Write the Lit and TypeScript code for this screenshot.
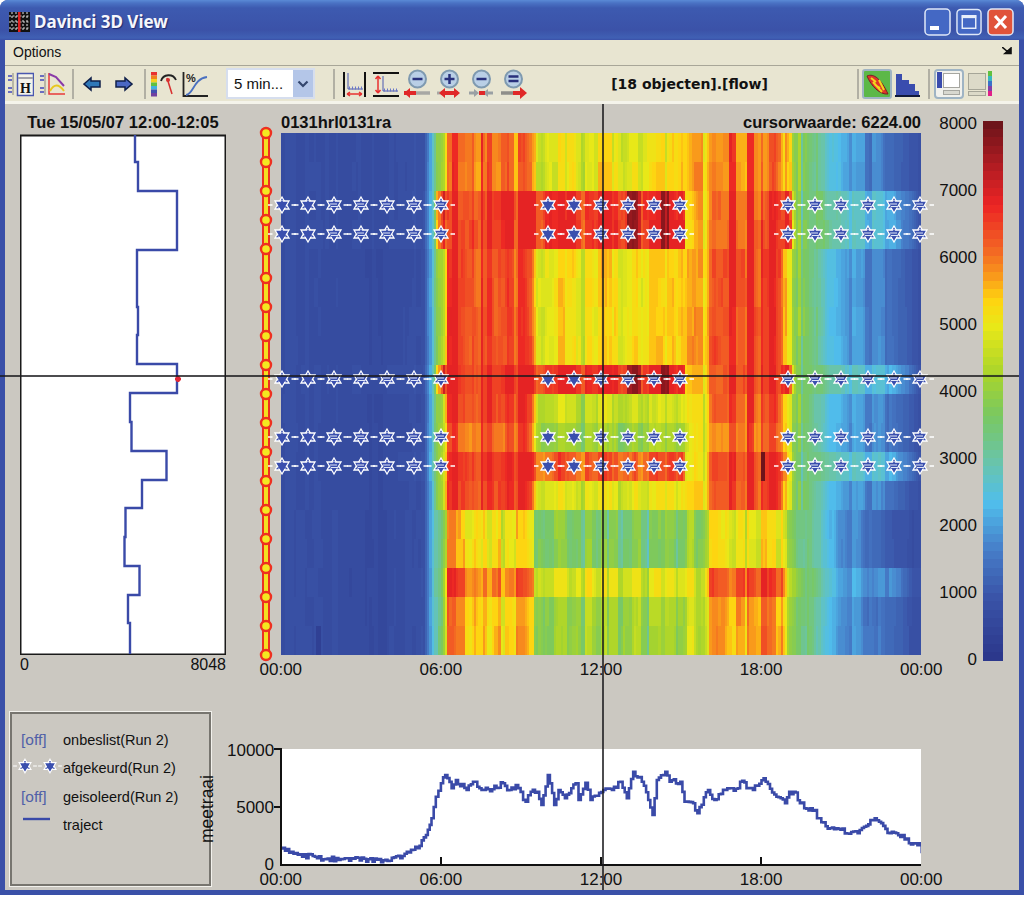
import { LitElement, css, html, svg } from "lit";
import { customElement } from "lit/decorators.js";

// colour ramp of the legend, value -> rgb
const RAMP: [number, number[]][] = [
  [0, [42, 52, 136]],
  [1000, [58, 84, 168]],
  [1700, [70, 125, 200]],
  [2400, [80, 190, 236]],
  [3000, [105, 196, 170]],
  [3700, [122, 200, 96]],
  [4300, [168, 212, 44]],
  [5000, [232, 232, 24]],
  [5400, [254, 212, 16]],
  [5800, [248, 146, 28]],
  [6200, [242, 96, 36]],
  [6800, [236, 36, 36]],
  [7400, [176, 28, 34]],
  [8000, [110, 20, 26]],
];

function rampColor(v: number) {
  const q = Math.max(0, Math.min(8000, Math.round(v / 125) * 125));
  for (let i = 1; i < RAMP.length; i++) {
    if (q <= RAMP[i][0]) {
      const [a, ca] = RAMP[i - 1];
      const [b, cb] = RAMP[i];
      const t = (q - a) / (b - a);
      const c = ca.map((x, k) => Math.round(x + (cb[k] - x) * t));
      return `rgb(${c[0]},${c[1]},${c[2]})`;
    }
  }
  return "rgb(110,20,26)";
}

function rng(seed: number) {
  let s = seed;
  return () => {
    s = (s * 1664525 + 1013904223) % 4294967296;
    return s / 4294967296;
  };
}

function stripes(seed: number, n: number) {
  const r = rng(seed);
  const out: number[] = [];
  while (out.length < n) {
    const v = r() * 2 - 1;
    const len = 1 + Math.floor(r() * 4);
    for (let i = 0; i < len; i++) out.push(v);
  }
  return out;
}

const KEYS = [281, 385, 425, 432, 438, 445, 448, 525, 545, 612, 684, 686, 705, 712, 780, 788, 800, 830, 895, 921];
const A = [850, 750, 950, 2500, 4300, 5200, 6500, 5900, 4800, 4900, 5100, 5200, 5400, 6200, 6200, 5000, 3900, 2500, 1300, 900];
const B = [850, 750, 1000, 2600, 5000, 6900, 6800, 6700, 6700, 6700, 6700, 5000, 5300, 6500, 6700, 6500, 3700, 3000, 2200, 1000];
const C = [850, 700, 900, 2400, 4400, 5200, 6800, 6200, 5000, 5100, 5200, 5300, 5500, 6500, 6700, 4800, 3900, 2400, 1400, 900];
const E = [850, 700, 900, 2400, 4400, 5200, 6800, 6400, 4500, 4500, 4600, 4800, 5000, 6300, 6500, 4700, 3800, 2400, 1500, 900];
const F = [850, 700, 900, 2400, 4400, 5200, 6400, 6100, 4000, 4000, 4100, 4500, 4900, 6100, 6200, 4700, 3700, 2400, 1500, 900];
const G = [850, 700, 1000, 2500, 4400, 5500, 6800, 6700, 6100, 6100, 6200, 4700, 5000, 6500, 6700, 5000, 3500, 3000, 2200, 1000];
const H = [850, 700, 900, 2400, 4400, 5200, 6800, 6500, 4800, 4800, 4900, 5000, 5200, 6400, 6700, 4600, 3700, 2400, 1400, 850];
const I = [850, 700, 900, 2300, 3600, 4400, 5400, 5000, 3800, 3500, 3500, 3700, 4300, 4800, 5000, 4300, 3500, 2300, 1000, 800];
const J = [850, 700, 900, 2300, 3800, 4800, 6200, 5900, 4700, 4800, 4700, 4800, 5000, 6000, 6400, 5000, 3800, 2500, 1700, 900];
const K = [850, 700, 900, 2300, 3700, 4600, 5700, 5300, 4000, 4100, 4000, 4300, 4800, 5400, 5700, 4600, 3600, 2300, 1300, 800];
const ROWS = [A, A, B, B, C, C, C, C, B, E, F, G, H, I, I, J, K, K];

const COLS = 288;
const CW = 640 / COLS;
const RH = 29;

function drawHeat(canvas: HTMLCanvasElement) {
  const ctx = canvas.getContext("2d")!;
  const s1 = stripes(11, COLS + 8);
  const s2 = stripes(57, COLS + 8);
  ROWS.forEach((tbl, r) => {
    const fine = stripes(200 + r, COLS + 8);
    for (let c = 0; c < COLS; c++) {
      const x = 281 + (c + 0.5) * CW;
      let k = 0;
      while (k < KEYS.length - 2 && x > KEYS[k + 1]) k++;
      const t = Math.min(1, (x - KEYS[k]) / (KEYS[k + 1] - KEYS[k]));
      let v = tbl[k] + (tbl[k + 1] - tbl[k]) * t;
      const amp = v < 1500 ? 90 : v < 3000 ? 380 : 800;
      const share = (r < 4 ? s1[c] : r < 13 ? s1[c] * 0.7 + s2[c] * 0.3 : s2[c]) * 0.8 + fine[c] * 0.2;
      v = Math.min(6850, v + share * amp);
      if (tbl === B && ((x > 437 && x < 446) || (x > 628 && x < 640) || (x > 660 && x < 670))) v += 900;
      if (tbl === G && x > 761 && x < 765) v += 1500;
      if (r === 17 && x > 316 && x < 322) v = 350;
      ctx.fillStyle = rampColor(v);
      ctx.fillRect(Math.floor((c * 640) / COLS), r * RH, Math.ceil(CW) + 1, RH);
    }
  });
}

function drawRamp(canvas: HTMLCanvasElement) {
  const ctx = canvas.getContext("2d")!;
  for (let i = 0; i < 64; i++) {
    ctx.fillStyle = rampColor(8000 - (i + 0.5) * 125);
    ctx.fillRect(0, Math.floor(i * 8.4375), 20, 9);
  }
}

const STAR_X = [282, 308, 334, 361, 387, 414, 441, 548, 574, 601, 628, 654, 680, 788, 815, 841, 868, 894, 920];
const STAR_Y = [205, 234, 379, 437, 466];
const TRI_A = "0,-8 7,4 -7,4";
const TRI_B = "0,8 7,-4 -7,-4";

const star = (x: number, y: number, k = 1, lined = false) => svg`
  <g transform="translate(${x} ${y}) scale(${k})">
    <path d="M-14 0H-9.500M9.500 0H14" stroke="#fff" stroke-width="1.300" />
    <polygon points=${TRI_A} fill="#3a4fae" stroke="#fff" stroke-width="1.300" />
    <polygon points=${TRI_B} fill="#3a4fae" stroke="#fff" stroke-width="1.300" />
    <polygon points="0,-5 4.400,2.500 -4.400,2.500" fill="#3a4fae" />
    <polygon points="0,5 4.400,-2.500 -4.400,-2.500" fill="#3a4fae" />
    ${lined ? svg`<path d="M-4 -1H3M-3 1.500H4" stroke="#dfe6f6" stroke-width="1" />` : ""}
  </g>`;

const PROFILE: [number, number][] = [
  [25, 325], [50, 335], [75, 350], [100, 348], [125, 358], [180, 355], [230, 358], [280, 362], [310, 348], [345, 325],
  [365, 285], [378, 235], [388, 170], [400, 130], [410, 105], [425, 145], [435, 120], [460, 150], [475, 125], [490, 145],
  [520, 148], [545, 130], [560, 150], [575, 135], [598, 185], [610, 155], [625, 155], [635, 195], [650, 105], [665, 195],
  [675, 150], [690, 175], [715, 130], [722, 180], [738, 128], [750, 180], [780, 150], [800, 150], [820, 125], [835, 175],
  [850, 95], [870, 125], [885, 180], [895, 225], [905, 120], [925, 95], [935, 125], [960, 125], [970, 185], [990, 190],
  [1000, 220], [1025, 150], [1040, 180], [1065, 150], [1095, 145], [1100, 125], [1130, 150], [1155, 115], [1185, 170], [1205, 190],
  [1215, 155], [1225, 155], [1250, 205], [1275, 210], [1280, 235], [1310, 265], [1375, 280], [1390, 260], [1415, 235], [1450, 280],
  [1480, 285], [1495, 310], [1520, 310], [1525, 340],
];

// stepped trace of the lower chart, in the svg's own coordinates (plot starts at 7,4)
function profilePath() {
  const pts = PROFILE.map(([x, y]) => [270 + x / 2.34 - 274, 740 + y / 3 - 745]);
  const r = rng(5);
  let d = `M${pts[0][0]} ${pts[0][1]}`;
  for (let i = 1; i < pts.length; i++) {
    const [x0, y0] = pts[i - 1];
    const [x1, y1] = pts[i];
    const n = Math.max(1, Math.round((x1 - x0) / 2.2));
    for (let k = 1; k <= n; k++) {
      const x = x0 + ((x1 - x0) * k) / n;
      const y = y0 + ((y1 - y0) * k) / n + (k < n ? (r() - 0.5) * 5 : 0);
      d += `H${x.toFixed(1)}V${y.toFixed(1)}`;
    }
  }
  return d;
}

const TRAJECT =
  "M115 0V27H118V56H157V115H117V172H118V200H117V229H157V258H110V287H111.500V316H146.500V345H122V373H105.500V402H104.500V431H119.500V460H108V488H110V519";

@customElement("app-root")
export class AppRoot extends LitElement {
  static styles = css`
    :host {
      display: block;
      width: 1024px;
      height: 897px;
      background: #fff;
      font-family: "Liberation Sans", Arial, sans-serif;
      color: #111;
      overflow: hidden;
    }
    .win {
      height: 895px;
      display: flex;
      flex-direction: column;
      background: #3a50a8;
      border-radius: 8px 8px 0 0;
    }
    .title {
      height: 40px;
      flex: none;
      box-sizing: border-box;
      display: flex;
      align-items: center;
      padding: 3px 10px 0 9px;
      border-radius: 8px 8px 0 0;
      background: linear-gradient(180deg, #5a8ad6 0, #4a72c4 3px, #3d5ab0 8px, #3b52a8 30px, #4060b4 38px, #3a50a8 40px);
    }
    .title .name {
      margin-left: 4px;
      font-family: "Noto Sans", sans-serif;
      font-weight: 700;
      font-size: 17px;
      color: #f4f6fc;
      text-shadow: 1px 1px 1px #1c2a70;
      flex: 1;
    }
    .ctl {
      display: flex;
      gap: 5px;
    }
    .ctl svg { display: block; }
    .inner {
      flex: 1;
      margin: 0 5px 5px;
      display: flex;
      flex-direction: column;
      position: relative;
      background: #cbc8c1;
    }
    .menu {
      height: 25px;
      flex: none;
      box-sizing: border-box;
      background: #e8e5d1;
      display: flex;
      align-items: center;
      justify-content: space-between;
      padding: 0 7px 2px 8px;
      font-size: 14px;
    }
    .tools {
      height: 39px;
      flex: none;
      box-sizing: border-box;
      background: #e8e5d1;
      border-top: 1px solid #a8a698;
      border-bottom: 3px solid #f4f3ea;
      display: flex;
      align-items: center;
      padding: 0 26px 0 3px;
    }
    .tools svg { display: block; flex: none; }
    .group { display: flex; align-items: center; gap: 5px; flex: none; }
    .g6 { gap: 6px; }
    .g14 { gap: 14px; }
    .g4 { gap: 4px; }
    .g3 { gap: 3px; }
    .sep {
      width: 2px;
      height: 30px;
      flex: none;
      background: #b2b0a4;
      margin: 0 9px 0 6px;
    }
    .sep.near { margin: 0 5px 0 11px; }
    .sep.after-combo { margin: 0 6px 0 18px; }
    .sep.last { margin: 0 3px 0 0; }
    .sep.tail { margin: 0 4px 0 8px; }
    .combo {
      margin-left: 17px;
      width: 89px;
      height: 31px;
      box-sizing: border-box;
      flex: none;
      border: 2px solid #d6deee;
      background: #fff;
      display: flex;
      align-items: center;
      justify-content: space-between;
      padding-left: 6px;
      font-size: 15px;
    }
    .combo .btn {
      width: 20px;
      height: 27px;
      background: #b4c6e8;
      display: flex;
      align-items: center;
      justify-content: center;
    }
    .status {
      flex: 1;
      text-align: center;
      font-family: "DejaVu Sans", sans-serif;
      font-weight: 700;
      font-size: 14px;
      padding-right: 5px;
    }
    .active {
      width: 30px;
      height: 30px;
      box-sizing: border-box;
      border: 2px solid #9fb4c4;
      border-radius: 3px;
      background: #5cb848;
    }
    .plots {
      display: grid;
      grid-template-columns: 206px 55px 640px 97px;
      grid-template-rows: 29px 522px 57px;
      padding-left: 15px;
    }
    .plots svg, .plots canvas, .bottom svg { display: block; }
    .head {
      font-weight: 700;
      font-size: 16.500px;
      align-self: center;
      padding-top: 8px;
    }
    .head.left { text-align: center; white-space: nowrap; }
    .head.main {
      grid-column: 3;
      display: flex;
      justify-content: space-between;
    }
    .range {
      display: flex;
      justify-content: space-between;
      font-size: 16px;
      line-height: 20px;
    }
    .heat { position: relative; grid-column: 3; grid-row: 2; }
    .heat .over { position: absolute; inset: 0; overflow: visible; }
    .track { grid-column: 2; grid-row: 2; overflow: visible; }
    .hours {
      display: flex;
      justify-content: space-between;
      font-size: 17px;
      line-height: 20px;
      width: 683px;
      margin-left: -21.500px;
    }
    .plots .hours { grid-column: 3; grid-row: 3; margin-top: 5px; }
    .scale {
      grid-column: 4;
      grid-row: 1 / 4;
      display: flex;
      align-items: flex-start;
      justify-content: flex-end;
      gap: 6px;
      padding: 10px 15px 0 0;
      font-size: 17px;
      line-height: 20px;
    }
    .scale .ticks {
      height: 556px;
      display: flex;
      flex-direction: column;
      justify-content: space-between;
      text-align: right;
    }
    .scale canvas { margin-top: 7px; }
    .bottom {
      display: flex;
      padding-left: 5px;
      position: relative;
    }
    .legend {
      width: 201px;
      height: 174px;
      box-sizing: border-box;
      border: 2px solid #77756f;
      outline: 1px solid #f2f1ec;
      padding: 14px 0 0 10px;
      font-size: 14.500px;
      position: relative;
    }
    .legend .row {
      display: grid;
      grid-template-columns: 41px auto;
      height: 28.400px;
      line-height: 24px;
    }
    .legend .off { color: #5060a8; font-size: 15.500px; margin-left: -1px; }
    .legend svg { overflow: visible; margin-top: 4px; }
    .meet {
      position: absolute;
      left: 193px;
      top: 63px;
      writing-mode: vertical-rl;
      transform: rotate(180deg);
      font-size: 17.500px;
      line-height: 18px;
    }
    .line {
      display: grid;
      grid-template-columns: 47px 647px;
      grid-template-rows: 127px auto;
      margin: 29px 0 0 16px;
    }
    .yaxis {
      grid-row: 1 / 3;
      height: 134px;
      display: flex;
      flex-direction: column;
      justify-content: space-between;
      text-align: right;
      font-size: 17px;
      line-height: 20px;
    }
    .chart { margin-top: 4px; }
    .line .hours { margin-left: -14.500px; margin-top: 2px; }
    .cross-h {
      position: absolute;
      left: -5px;
      right: 0;
      top: 335px;
      height: 2px;
      background: rgba(25, 25, 30, 0.78);
    }
    .cross-v {
      position: absolute;
      left: 597px;
      top: 64px;
      bottom: 0;
      width: 2px;
      background: rgba(25, 25, 30, 0.78);
    }
  `;

  firstUpdated() {
    drawHeat(this.renderRoot.querySelector(".heat canvas") as HTMLCanvasElement);
    drawRamp(this.renderRoot.querySelector(".scale canvas") as HTMLCanvasElement);
  }

  private appIcon() {
    return html`<svg width="21" height="20" viewBox="0 0 21 20">
      <rect width="21" height="20" fill="#111" />
      ${[4, 10, 16].map((y) => svg`<path d="M0 ${y}H21" stroke="#ddd" stroke-dasharray="2 1.500" />`)}
      ${[3, 7, 14, 18].map((x) => svg`<path d="M${x} 0V20" stroke="#e8e8e8" stroke-width="1" stroke-dasharray="2 2" />`)}
      <rect x="9" width="2.500" height="20" fill="#e02020" />
    </svg>`;
  }

  private controls() {
    const frame = (fill: string) => svg`<rect x="1" y="1" width="25" height="26" rx="4" fill=${fill} stroke="#dfe8f8" stroke-width="1.500" />`;
    return html`<div class="ctl">
      <svg width="27" height="28" viewBox="0 0 27 28">
        ${frame("#4468c4")}
        <rect x="6" y="18" width="9" height="4" fill="#fff" />
      </svg>
      <svg width="26" height="28" viewBox="0 0 27 28">
        ${frame("#4468c4")}
        <rect x="6.500" y="7.500" width="14" height="13" fill="none" stroke="#e8eefa" stroke-width="1.500" />
        <rect x="6" y="7" width="15" height="3" fill="#e8eefa" />
      </svg>
      <svg width="27" height="28" viewBox="0 0 27 28">
        ${frame("#e0533a")}
        <path d="M8 8L19 20M19 8L8 20" stroke="#fff" stroke-width="3" />
      </svg>
    </div>`;
  }

  private dashes(x: number) {
    return svg`<path d="M${x} 7H${x + 4}M${x} 11H${x + 4}M${x} 19H${x + 4}M${x} 23H${x + 4}" stroke="#6a6ec0" stroke-width="2" />
      <path d="M${x + 5} 4V26" stroke="#a8a698" stroke-width="1.500" />`;
  }

  private toolIcons() {
    return html`<div class="group g6">
      <svg width="26" height="30" viewBox="0 0 26 30">
        ${this.dashes(0)}
        <rect x="9.500" y="4.500" width="16" height="22" fill="#f4f3ea" stroke="#4a58b0" stroke-width="1.500" />
        <rect x="10" y="8" width="15" height="2" fill="#a0a0a8" />
        <text x="17.500" y="24" font-family="Liberation Serif" font-weight="700" font-size="14" text-anchor="middle" fill="#111">H</text>
      </svg>
      <svg width="26" height="30" viewBox="0 0 26 30">
        ${this.dashes(0)}
        <path d="M9 4V25H25" fill="none" stroke="#e83a3a" stroke-width="1.500" />
        <path d="M9 5L16 8L24 17" fill="none" stroke="#8a3aa8" stroke-width="2" />
        <path d="M10 22Q16 11 24 22" fill="none" stroke="#e8c820" stroke-width="2" />
      </svg>
    </div>
    <div class="sep"></div>
    <div class="group g14">
      <svg width="18" height="30" viewBox="0 0 18 30">
        <path d="M1 15L8 9V12H17V18H8V21Z" fill="#2f78b8" stroke="#10204a" stroke-width="1.500" />
      </svg>
      <svg width="18" height="30" viewBox="0 0 18 30">
        <path d="M17 15L10 9V12H1V18H10V21Z" fill="#4a68c4" stroke="#10204a" stroke-width="1.500" />
      </svg>
    </div>
    <div class="sep near"></div>
    <div class="group g4">
      <svg width="27" height="30" viewBox="0 0 27 30">
        ${["#e83030", "#f08020", "#f4d020", "#60c040", "#40b0e0", "#4050b0", "#7040a0"].map(
          (c, i) => svg`<rect x="0" y=${3 + i * 3.5} width="6" height="3.500" fill=${c} />`
        )}
        <path d="M10 12A8 8 0 0 1 25 11" fill="none" stroke="#222" stroke-width="1.800" />
        <path d="M16 9L21 25" stroke="#d83030" stroke-width="1.500" />
        <circle cx="17" cy="11" r="2" fill="#d83030" />
      </svg>
      <svg width="27" height="30" viewBox="0 0 27 30">
        <path d="M1.500 3V27H26" fill="none" stroke="#222" stroke-width="1.800" />
        <text x="4" y="13" font-family="Liberation Sans" font-weight="700" font-size="11" fill="#222">%</text>
        <path d="M4 26C12 25 11 10 25 8" fill="none" stroke="#4a70c0" stroke-width="1.800" />
      </svg>
    </div>
    <div class="combo">
      <span>5 min...</span>
      <span class="btn">
        <svg width="12" height="8" viewBox="0 0 12 8"><path d="M1.500 1.500L6 6L10.500 1.500" fill="none" stroke="#33466e" stroke-width="2.200" /></svg>
      </span>
    </div>
    <div class="sep after-combo"></div>
    <div class="group">
      <svg width="26" height="30" viewBox="0 0 26 30">
        <path d="M3 3V28M24 3V28" stroke="#111" stroke-width="2" />
        <path d="M7 4V20H22" fill="none" stroke="#4a58b0" stroke-width="1" />
        <path d="M8 19H22" stroke="#6a78c8" stroke-dasharray="1 2" stroke-width="3" />
        <path d="M6 25H21M6 25L9 23M6 25L9 27M21 25L18 23M21 25L18 27" fill="none" stroke="#e83030" stroke-width="1.500" />
      </svg>
      <svg width="27" height="30" viewBox="0 0 27 30">
        <path d="M1 4H27M1 27H27" stroke="#111" stroke-width="2" />
        <path d="M6 7V24M6 7L3.500 10M6 7L8.500 10M6 24L3.500 21M6 24L8.500 21" fill="none" stroke="#e83030" stroke-width="1.500" />
        <path d="M11 7V22H26" fill="none" stroke="#4a58b0" stroke-width="1" />
        <path d="M12 21H26" stroke="#6a78c8" stroke-dasharray="1 2" stroke-width="3" />
      </svg>
      ${this.glass("m", svg`<path d="M0 24H12" stroke="#e02828" stroke-width="4"/><path d="M0 24L6 19V29Z" fill="#e02828"/><path d="M12 24H26" stroke="#a8a8a4" stroke-width="3.500"/>`)}
      ${this.glass("p", svg`<path d="M1 24H6" stroke="#a8a8a4" stroke-width="3"/><path d="M5 24H22" stroke="#e02828" stroke-width="4"/><path d="M3 24L9 19V29Z M24 24L18 19V29Z" fill="#e02828"/>`)}
      ${this.glass("m", svg`<path d="M1 24H7" stroke="#9aa0a4" stroke-width="3"/><path d="M11 24L6 20V28Z M15 24L20 20V28Z" fill="#9aa0a4"/><path d="M11 24H17" stroke="#e02828" stroke-width="4"/><path d="M19 24H25" stroke="#9aa0a4" stroke-width="3"/>`)}
      ${this.glass("d", svg`<path d="M1 24H14" stroke="#8e8e8a" stroke-width="3.500"/><path d="M13 24H22" stroke="#e02828" stroke-width="4"/><path d="M27 24L20 18V30Z" fill="#e02828"/>`)}
    </div>`;
  }

  private glass(kind: string, arrow: unknown) {
    return html`<svg width="27" height="30" viewBox="0 0 27 30">
      <circle cx="13.500" cy="10" r="8.500" fill="#b9cfe6" stroke="#7f9ab0" stroke-width="2" />
      ${kind === "d"
        ? svg`<path d="M8.500 7.500H18.500M8.500 12H18.500" stroke="#28307c" stroke-width="2.500" />`
        : svg`<path d="M8.500 10H18.500" stroke="#28307c" stroke-width="2.500" />`}
      ${kind === "p" ? svg`<path d="M13.500 5V15" stroke="#28307c" stroke-width="2.500" />` : ""}
      ${arrow}
    </svg>`;
  }

  private rightIcons() {
    return html`<div class="sep last"></div>
    <div class="group g3">
      <div class="active">
        <svg width="26" height="26" viewBox="0 0 26 26">
          <path d="M3 5C10 2 17 8 24 23C16 24 7 15 3 5Z" fill="#e0342c" stroke="#7a2020" stroke-width="1" />
          <path d="M7 7L12 11M11 14L16 17M15 9L20 19M9 11L18 21" stroke="#f2d81c" stroke-width="2" />
        </svg>
      </div>
      <svg width="25" height="30" viewBox="0 0 25 30">
        <path d="M1 5H7V11H14V15H20V22H24V27H1Z" fill="#3a4cae" />
        <path d="M0 27H25" stroke="#10183a" stroke-width="2" />
      </svg>
    </div>
    <div class="sep tail"></div>
    <div class="group g3">
      <svg width="30" height="30" viewBox="0 0 30 30">
        <rect x="1" y="1" width="28" height="28" rx="3" fill="#f1f1ec" stroke="#9fb4c4" stroke-width="2" />
        <rect x="3" y="3" width="5" height="16" fill="#3a4cae" />
        <rect x="9.500" y="4.500" width="16" height="14" fill="#fff" stroke="#a6a6a0" />
        <rect x="9.500" y="21.500" width="16" height="4" fill="#d8d8d0" stroke="#a6a6a0" />
      </svg>
      <svg width="26" height="30" viewBox="0 0 26 30">
        <rect x="1.500" y="4.500" width="17" height="16" fill="#dcdac8" stroke="#a6a698" />
        <rect x="1.500" y="22.500" width="17" height="4" fill="#dcdac8" stroke="#a6a698" />
        ${["#60c040", "#38b8c0", "#3a70c8", "#8040a8", "#e02088"].map(
          (c, i) => svg`<rect x="21" y=${2 + i * 5} width="4" height="5" fill=${c} />`
        )}
      </svg>
    </div>`;
  }

  render() {
    const hours = ["00:00", "06:00", "12:00", "18:00", "00:00"];
    const hourRow = html`${hours.map((h) => html`<span>${h}</span>`)}`;
    const circles = Array.from({ length: 19 }, (_, i) => i * 29);
    return html`<div class="win">
      <div class="title">
        ${this.appIcon()}
        <span class="name">Davinci 3D View</span>
        ${this.controls()}
      </div>
      <div class="inner">
        <div class="menu">
          <span>Options</span>
          <svg width="10" height="9" viewBox="0 0 10 9">
            <path d="M0 0L6 5M3 6.500H9V1Z" stroke="#111" stroke-width="1.600" fill="#111" />
          </svg>
        </div>
        <div class="tools">
          ${this.toolIcons()}
          <div class="status">[18 objecten].[flow]</div>
          ${this.rightIcons()}
        </div>
        <div class="plots">
          <div class="head left">Tue 15/05/07 12:00-12:05</div>
          <div class="head main"><span>0131hrl0131ra</span><span>cursorwaarde: 6224.00</span></div>
          <svg class="profile" width="206" height="522" viewBox="0 0 206 522">
            <rect x="0.500" y="2.500" width="205" height="519" fill="#fff" stroke="#1a1a1a" stroke-width="2" />
            <path d=${TRAJECT} transform="translate(0 2)" fill="none" stroke="#3a4aa8" stroke-width="2.400" />
            <path d="M155 246L161 246M158 243L158 249M156 244L160 248M160 244L156 248" stroke="#e02838" stroke-width="2" />
          </svg>
          <svg class="track" width="55" height="522" viewBox="0 0 55 522">
            <rect x="37" y="0" width="6" height="522" fill="#f4e020" stroke="#ec3020" stroke-width="2" />
            ${circles.map((y) => svg`<circle cx="40" cy=${y} r="5" fill="#f4e820" stroke="#ee3020" stroke-width="2.400" />`)}
          </svg>
          <div class="heat">
            <canvas width="640" height="522"></canvas>
            <svg class="over" width="640" height="522" viewBox="281 133 640 522">
              ${STAR_Y.map((y) => STAR_X.map((x, i) => star(x, y, 1, i % 7 > 1 || i > 13)))}
            </svg>
          </div>
          <div class="scale">
            <div class="ticks">
              ${[8000, 7000, 6000, 5000, 4000, 3000, 2000, 1000, 0].map((t) => html`<span>${t}</span>`)}
            </div>
            <canvas width="20" height="540"></canvas>
          </div>
          <div class="range"><span>0</span><span>8048</span></div>
          <div class="hours">${hourRow}</div>
        </div>
        <div class="bottom">
          <div class="legend">
            <div class="row"><span class="off">[off]</span><span>onbeslist(Run 2)</span></div>
            <div class="row">
              <svg width="40" height="20" viewBox="0 0 40 20">
                ${star(3, 6, 0.85)}${star(28, 6, 0.85)}
              </svg>
              <span>afgekeurd(Run 2)</span>
            </div>
            <div class="row"><span class="off">[off]</span><span>geisoleerd(Run 2)</span></div>
            <div class="row">
              <svg width="40" height="20" viewBox="0 0 40 20">
                <path d="M1 2H28" stroke="#3a4aa8" stroke-width="2.400" />
              </svg>
              <span>traject</span>
            </div>
          </div>
          <div class="meet">meetraai</div>
          <div class="line">
            <div class="yaxis"><span>10000</span><span>5000</span><span>0</span></div>
            <svg class="chart" width="647" height="122" viewBox="0 0 647 122">
              <rect x="7" y="4" width="640" height="116" fill="#fff" />
              <path d=${profilePath()} fill="none" stroke="#3a4aa8" stroke-width="2.600" />
              <path d="M7 3V120H647M0 4H7M0 62H7M167 120V112M327 120V112M487 120V112" fill="none" stroke="#111" stroke-width="2" />
            </svg>
            <div class="hours">${hourRow}</div>
          </div>
        </div>
        <div class="cross-h"></div>
        <div class="cross-v"></div>
      </div>
    </div>`;
  }
}
